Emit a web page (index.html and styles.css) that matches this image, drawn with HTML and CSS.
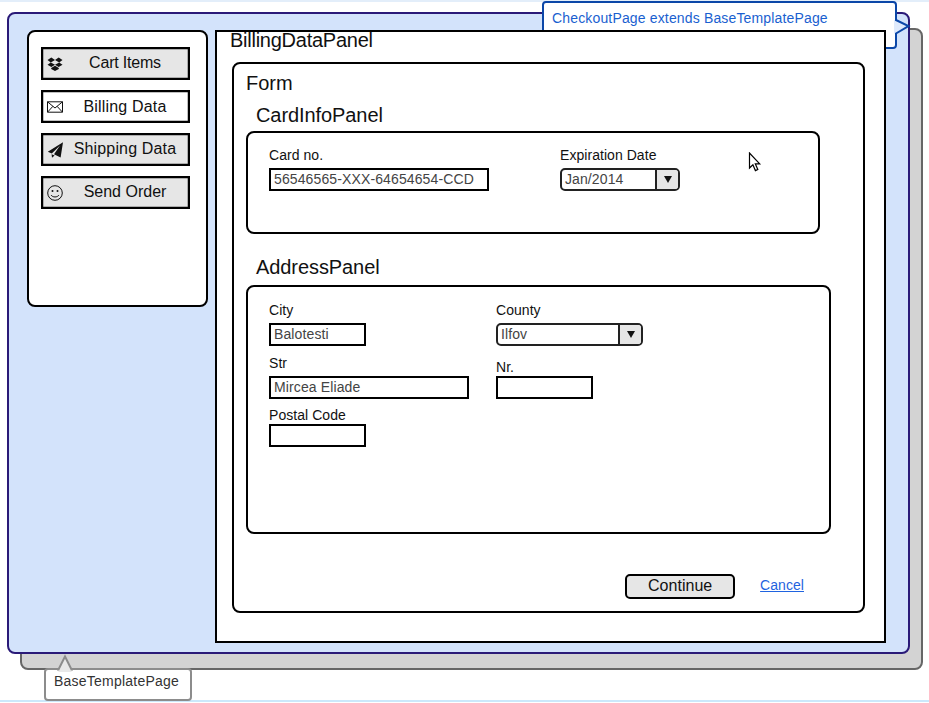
FILE: index.html
```html
<!DOCTYPE html>
<html lang="en">
<head>
<meta charset="utf-8">
<title>CheckoutPage</title>
<link rel="stylesheet" href="styles.css">
</head>
<body>
<div class="canvas">
  <div class="top-line"></div>
  <div class="bottom-line"></div>
  <div class="shadow-page"></div>
  <div class="blue-page"></div>

  <nav class="nav-panel">
    <a class="nav-btn">
      <svg class="nav-icon" viewBox="0 0 16 16"><path d="M4.3 1.6 .5 4l3.3 2.4L8 4ZM11.7 1.6 8 4l4.2 2.4L15.5 4ZM.5 8.8l3.8 2.3L8 8.8 3.8 6.4ZM8 8.8l3.7 2.3 3.8-2.3-3.3-2.4ZM4.2 11.9v1L8 15l3.8-2.1v-1L8 9.8Z" fill="#111"/></svg>
      <span class="nav-label label-cart">Cart Items</span>
    </a>
    <a class="nav-btn nav-btn-active">
      <svg class="nav-icon" viewBox="0 0 16 16"><path d="M.5 2.8h15v10.4H.5Z M.5 2.8 8 9l7.5-6.2M.5 13.2l5.4-5.9M15.5 13.2l-5.4-5.9" fill="#fff" stroke="#111" stroke-width="1"/></svg>
      <span class="nav-label label-billing">Billing Data</span>
    </a>
    <a class="nav-btn">
      <svg class="nav-icon" viewBox="0 0 16 16"><path d="M16 .3 .8 9.8l4 1.6L13 3.6 7 12.2l6.6 3.4Z M4.6 12.2 5 15.8l2.6-2.4Z" fill="#111"/></svg>
      <span class="nav-label label-shipping">Shipping Data</span>
    </a>
    <a class="nav-btn">
      <svg class="nav-icon" viewBox="0 0 16 16"><circle cx="8" cy="8" r="7.3" fill="none" stroke="#111" stroke-width="1"/><circle cx="5.5" cy="6" r="1" fill="#111"/><circle cx="10.5" cy="6" r="1" fill="#111"/><path d="M4 10c1.6 2.6 6.4 2.6 8 0" fill="none" stroke="#111" stroke-width="1"/></svg>
      <span class="nav-label">Send Order</span>
    </a>
  </nav>

  <div class="note note-blue">
    <span>CheckoutPage extends BaseTemplatePage</span>
    <svg class="note-tail" viewBox="0 0 16 18"><path d="M-1 2 1 2 13.5 8 1 15.5-1 15.5Z" fill="#dfeafc"/><path d="M1 0 1 2 13.5 8 1 15.5 1 18" fill="none" stroke="#0b47a8" stroke-width="2"/></svg>
  </div>

  <section class="billing-panel">
    <h2 class="billing-title">BillingDataPanel</h2>
    <div class="form-panel">
      <h2 class="form-title">Form</h2>
      <h3 class="sub-title sub-card">CardInfoPanel</h3>
      <div class="group group-card">
        <div class="field field-cardno">
          <label class="field-label">Card no.</label>
          <div class="input input-card">56546565-XXX-64654654-CCD</div>
        </div>
        <div class="field">
          <label class="field-label">Expiration Date</label>
          <div class="select select-exp"><span class="select-value">Jan/2014</span><span class="select-btn"><i class="arrow"></i></span></div>
        </div>
      </div>
      <h3 class="sub-title sub-address">AddressPanel</h3>
      <div class="group group-address">
        <div class="addr-grid">
          <div class="field"><label class="field-label">City</label><div class="input input-s">Balotesti</div></div>
          <div class="field"><label class="field-label">County</label><div class="select select-county"><span class="select-value">Ilfov</span><span class="select-btn"><i class="arrow"></i></span></div></div>
          <div class="field"><label class="field-label">Str</label><div class="input input-m">Mircea Eliade</div></div>
          <div class="field"><label class="field-label label-tight">Nr.</label><div class="input input-s"></div></div>
          <div class="field"><label class="field-label label-tight">Postal Code</label><div class="input input-s"></div></div>
        </div>
      </div>
      <div class="actions">
        <button class="continue" type="button">Continue</button>
        <a class="cancel" href="#">Cancel</a>
      </div>
    </div>
  </section>

  <svg class="cursor" viewBox="0 0 14 20"><path d="M1.5 1v15l3.4-3.2 2.5 5.8 2.4-1.1-2.5-5.7h4.4Z" fill="#fff" stroke="#000" stroke-width="1.2"/></svg>

  <div class="note note-gray">
    <span>BaseTemplatePage</span>
    <svg class="note-tail-up" viewBox="0 0 16 18"><path d="M1.5 18 1.5 15.5 8 2.5 14.5 15.5 14.5 18Z" fill="#e8e8e8"/><path d="M0 15.5 1.5 15.5 8 2.5 14.5 15.5 16 15.5" fill="none" stroke="#8c8c8c" stroke-width="2"/></svg>
  </div>
</div>
</body>
</html>
```
FILE: styles.css
```css
* { box-sizing: border-box; }
html, body { margin: 0; padding: 0; background: #fff; }
body { font-family: "Liberation Sans", Arial, sans-serif; color: #111; }
h2, h3 { margin: 0; font-weight: 400; }

.canvas { position: relative; width: 929px; height: 703px; overflow: hidden; }

.top-line { position: absolute; left: 0; top: 0; width: 929px; height: 2px; background: #e3eefa; }
.bottom-line { position: absolute; left: 0; top: 700px; width: 929px; height: 2px; background: #cbe8fb; }

.shadow-page { position: absolute; left: 20px; top: 28px; width: 903px; height: 642px; background: #d3d3d3; border: 2px solid #666; border-radius: 8px; }
.blue-page { position: absolute; left: 7px; top: 12px; width: 903px; height: 642px; background: #d3e3fb; border: 2px solid #2a1a78; border-radius: 8px; }

.nav-panel { position: absolute; left: 27px; top: 30px; width: 181px; height: 277px; background: #fff; border: 2px solid #000; border-radius: 8px; padding: 15px 16px 15px 12px; display: flex; flex-direction: column; gap: 10px; }
.nav-btn { height: 33px; background: #e6e6e6; border: 2px solid #000; display: flex; align-items: center; padding-left: 4px; font-size: 16px; color: #111; box-shadow: inset 0 0 0 .25px #000; }
.nav-btn-active { background: #fff; }
.nav-icon { width: 16px; height: 16px; flex: none; }
.nav-label { flex: 1; text-align: center; padding: 0 1px 2px 0; white-space: nowrap; }
.label-cart { letter-spacing: -.2px; }
.label-billing { letter-spacing: .18px; padding-bottom: 0; }
.label-shipping { letter-spacing: .16px; }

.note { position: absolute; background: #fff; font-size: 14px; border-radius: 4px; border-style: solid; border-width: 2px; }
.note-blue { left: 542px; top: 1px; width: 355px; height: 48px; border-color: #0b47a8; color: #1a5fd0; padding: 7px 8px; letter-spacing: .155px; }
.note-tail { position: absolute; left: 351px; top: 15px; width: 16px; height: 18px; overflow: visible; }
.note-gray { left: 44px; top: 668px; width: 148px; height: 33px; border-color: #8c8c8c; color: #333; padding: 3px 8px; letter-spacing: .225px; }
.note-tail-up { position: absolute; left: 11px; top: -16px; width: 16px; height: 18px; }

.billing-panel { position: absolute; left: 215px; top: 30px; width: 671px; height: 613px; background: #fff; border: 2px solid #000; padding: 30px 20px 0 15px; }
.billing-title { position: absolute; left: 13px; top: -2px; font-size: 20px; line-height: 20px; color: #111; letter-spacing: -.25px; }
.form-panel { height: 551px; width: 633px; border: 2px solid #000; border-radius: 8px; padding: 7px 12px 0; position: relative; }
.form-title { font-size: 20px; line-height: 24px; }
.sub-title { font-size: 20px; line-height: 24px; padding-left: 10px; letter-spacing: -.08px; }
.sub-card { margin-top: 8px; }
.sub-address { margin-top: 21px; }

.group { border: 2px solid #000; border-radius: 8px; }
.group-card { width: 574px; height: 103px; margin-top: 4px; padding: 14px 21px; display: flex; align-items: flex-start; }
.group-address { width: 585px; height: 249px; margin-top: 6px; padding: 15px 21px; }
.field { display: flex; flex-direction: column; justify-content: flex-end; }
.field-cardno { width: 291px; }
.field-label { font-size: 14px; line-height: 16px; margin-bottom: 5px; color: #111; letter-spacing: .05px; }
.label-tight { margin-top: -1px; margin-bottom: 1px; }

.input { height: 23px; border: 2px solid #000; font-size: 14px; line-height: 19px; padding-left: 3px; color: #444; background: #fff; white-space: nowrap; letter-spacing: .12px; }
.input-card { width: 220px; }
.input-s { width: 97px; }
.input-m { width: 200px; }

.select { height: 23px; border: 2px solid #222; border-radius: 5px; display: flex; font-size: 14px; line-height: 19px; color: #444; background: #fff; overflow: hidden; letter-spacing: .1px; }
.select-exp { width: 120px; }
.select-county { width: 147px; }
.select-value { flex: 1; padding-left: 3px; }
.select-btn { width: 23px; flex: none; background: #e6e6e6; border-left: 2px solid #222; display: flex; align-items: center; justify-content: center; }
.arrow { width: 0; height: 0; border-left: 4.5px solid transparent; border-right: 4.5px solid transparent; border-top: 7px solid #111; }

.addr-grid { display: grid; grid-template-columns: 227px 1fr; row-gap: 9px; }

.actions { position: absolute; right: 59px; bottom: 12px; display: flex; align-items: center; gap: 25px; }
.continue { width: 110px; height: 25px; background: #e6e6e6; border: 2px solid #000; border-radius: 5px; font: 16px/20px "Liberation Sans", Arial, sans-serif; color: #111; padding: 0 0 1px; letter-spacing: .04px; }
.cancel { font-size: 14px; color: #1f63e0; text-decoration: underline; margin-bottom: 4px; letter-spacing: .05px; }

.cursor { position: absolute; left: 748px; top: 152px; width: 14px; height: 20px; }
```
